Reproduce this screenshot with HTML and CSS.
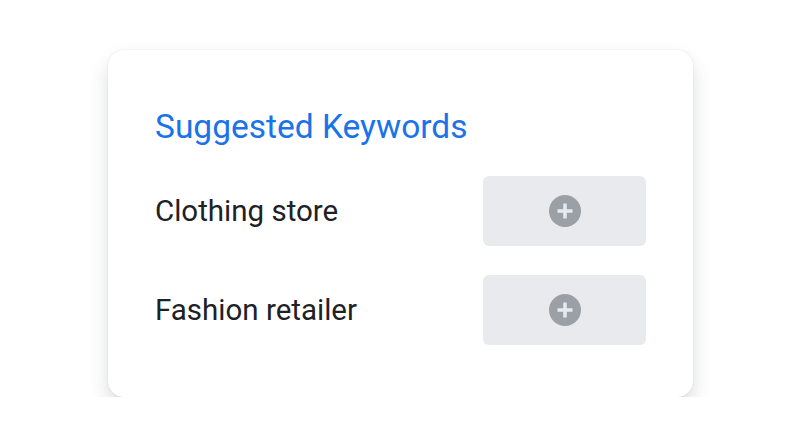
FILE: index.html
```html
<!DOCTYPE html>
<html>
<head>
<meta charset="utf-8">
<link rel="stylesheet" href="styles.css">
</head>
<body>
<div class="card">
  <h1 class="title">Suggested Keywords</h1>
  <div class="row">
    <span class="label">Clothing store</span>
    <button class="add" type="button" aria-label="Add">
      <svg width="32" height="32" viewBox="0 0 32 32"><circle cx="16" cy="16" r="16" fill="#9aa0a6"/><path d="M16 8.5v15M8.5 16h15" stroke="#e8eaed" stroke-width="3.5"/></svg>
    </button>
  </div>
  <div class="row">
    <span class="label">Fashion retailer</span>
    <button class="add" type="button" aria-label="Add">
      <svg width="32" height="32" viewBox="0 0 32 32"><circle cx="16" cy="16" r="16" fill="#9aa0a6"/><path d="M16 8.5v15M8.5 16h15" stroke="#e8eaed" stroke-width="3.5"/></svg>
    </button>
  </div>
</div>
</body>
</html>
```
FILE: styles.css
```css
html, body { margin: 0; padding: 0; background: #fff; }
body { font-family: Roboto, "Open Sans", sans-serif; }
.card {
  margin: 50px 0 0 108px;
  width: 585px;
  height: 347px;
  box-sizing: border-box;
  padding: 57px 47px 0;
  background: #fff;
  border-radius: 16px;
  box-shadow: 0 0 2px rgba(0,0,0,0.10), 0 10px 18px rgba(60,64,67,0.18);
}
.title {
  margin: 0;
  font-size: 33.5px;
  font-weight: 400;
  line-height: 40px;
  color: #1a73e8;
}
.row {
  display: flex;
  align-items: center;
  justify-content: space-between;
  margin-top: 29px;
}
.row + .row { margin-top: 29px; }
.label { font-size: 29.5px; color: #202124; }
.add {
  width: 163px;
  height: 70px;
  border: 0;
  padding: 0;
  border-radius: 6px;
  background: #e8eaed;
  display: flex;
  align-items: center;
  justify-content: center;
}
.add svg { display: block; }
```
